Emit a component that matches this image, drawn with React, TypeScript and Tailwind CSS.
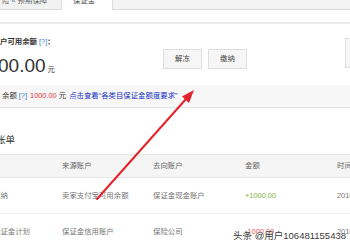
import React from "react";

const font = "font-['Liberation_Sans','Noto_Sans_CJK_SC',sans-serif]";

export default function App() {
  return (
    <div className={`relative w-[350px] h-[250px] overflow-hidden bg-white ${font}`}>
      {/* tabs */}
      <div className="flex h-[10px]">
        <div className="w-[62px] h-[10px] bg-[#f2f2f2] border-r border-b border-[#dcdcdc] overflow-hidden">
          <div className="-mt-[4px] ml-[2px] text-[7.4px] leading-[9px] text-[#666] whitespace-nowrap">险 « 预期保障</div>
        </div>
        <div className="w-[50px] h-[10px] bg-white overflow-hidden">
          <div className="-mt-[4px] ml-[11px] text-[7.4px] leading-[9px] text-[#555] whitespace-nowrap">保证金</div>
        </div>
        <div className="flex-1 h-[10px] bg-[#f3f3f3] border-l border-b border-[#dcdcdc]" />
      </div>
      <div className="h-[12px]" />
      <div className="h-[2px] bg-[#ebebeb]" />

      {/* balance card */}
      <div className="flex h-[61px]">
        <div className="w-[163px] pt-[13px]">
          <div className="text-[7.4px] leading-[10px] font-bold text-[#333] whitespace-nowrap">
            户可用余额 <span className="font-normal text-[#3d7bd0]">[?]</span>：
          </div>
          <div className="mt-[8px] flex items-baseline -ml-[2px] whitespace-nowrap">
            <span className="text-[19px] leading-[22px] text-[#333]">00.00</span>
            <span className="ml-[2px] text-[7.4px] text-[#333]">元</span>
          </div>
        </div>
        <div className="pt-[25px] flex gap-[6px]">
          <div className="w-[39px] h-[20px] bg-[#f6f6f6] border border-[#dedede] flex items-center justify-center text-[7.4px] text-[#444]">解冻</div>
          <div className="w-[39px] h-[20px] bg-[#f6f6f6] border border-[#dedede] flex items-center justify-center text-[7.4px] text-[#444]">缴纳</div>
        </div>
        <div className="ml-auto pt-[14px] -mr-[20px]">
          <div className="w-[25px] h-[30px] bg-[#f6f6f6] border border-[#dedede]" />
        </div>
      </div>
      <div className="h-[23px] bg-[#f7f7f7] border-b border-[#e2e2e2] flex items-center pl-[2px] text-[7.4px] whitespace-nowrap">
        <span className="text-[#333]">余额</span>
        <span className="ml-[2px] text-[#3d7bd0]">[?]</span>
        <span className="ml-[3px] text-[#e4393c]">1000.00</span>
        <span className="ml-[2px] text-[#333]">元</span>
        <span className="ml-[3px] text-[#2233c4]">点击查看“各类目保证金额度要求”</span>
      </div>

      {/* bills */}
      <div className="h-[26px]" />
      <div className="h-[20px] text-[9.5px] leading-[12px] text-[#333] -ml-[4px] whitespace-nowrap">账单</div>
      <div className="-ml-[7px] w-[460px]">
        <div className="grid grid-cols-[69px_91px_92px_92px_116px] h-[24px] items-center bg-[#f5f5f5] border-t border-b border-[#e6e6e6] text-[7.4px] text-[#666] whitespace-nowrap">
          <div />
          <div>来源账户</div>
          <div>去向账户</div>
          <div>金额</div>
          <div>时间</div>
        </div>
        <div className="grid grid-cols-[69px_91px_92px_92px_116px] h-[36px] items-center border-b border-[#eeeeee] text-[7.4px] text-[#777] whitespace-nowrap">
          <div>缴纳</div>
          <div>卖家支付宝可用余额</div>
          <div>保证金现金账户</div>
          <div className="text-[#7cb342]">+1000.00</div>
          <div>2016-08-01</div>
        </div>
        <div className="grid grid-cols-[69px_91px_92px_92px_116px] h-[36px] items-center text-[7.4px] text-[#777] whitespace-nowrap">
          <div>保证金计划</div>
          <div>保证金信用账户</div>
          <div>保险公司</div>
          <div className="text-[#e8523f]">-1000.00</div>
          <div>2016-08-01</div>
        </div>
      </div>

      {/* arrow overlay */}
      <svg className="absolute left-0 top-0 pointer-events-none" width="350" height="250" viewBox="0 0 350 250">
        <line x1="97" y1="199" x2="186" y2="99" stroke="#e3232b" strokeWidth="2" strokeLinecap="round" />
        <polygon points="194,90 189,103 182,96.5" fill="#e3232b" />
      </svg>

      {/* watermark */}
      <div className="absolute left-[233px] top-[230px] text-[9.5px] leading-[12px] text-[#3a3a3a] whitespace-nowrap [text-shadow:0_0_2px_#fff,0_0_1px_#fff]">
        头条 @用户106481155438
      </div>
    </div>
  );
}
